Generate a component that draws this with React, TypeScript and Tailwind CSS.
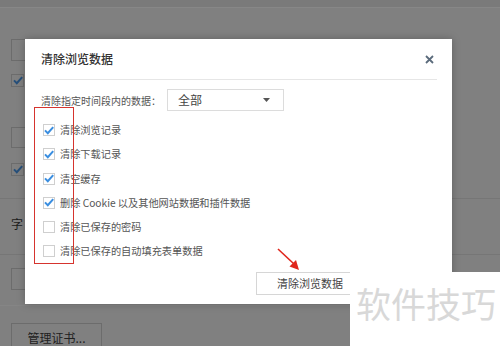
import React from "react";

const font = { fontFamily: '"Noto Sans CJK SC", "Noto Sans", sans-serif' };

const items = [
  { label: "清除浏览记录", checked: true },
  { label: "清除下载记录", checked: true },
  { label: "清空缓存", checked: true },
  { label: "删除 Cookie 以及其他网站数据和插件数据", checked: true },
  { label: "清除已保存的密码", checked: false },
  { label: "清除已保存的自动填充表单数据", checked: false },
];

function Check({ checked, dim }: { checked: boolean; dim?: boolean }) {
  return (
    <span
      className={
        dim
          ? "flex w-[13px] h-[13px] items-center justify-center border border-[#6c6c6c] bg-[#808080]"
          : "flex w-[12px] h-[12px] items-center justify-center border border-[#cfcfcf] bg-white"
      }
    >
      {checked && (
        <svg width="10" height="9" viewBox="0 0 10 9">
          <path
            d="M1 4.4 L3.8 7.2 L9.2 1.2"
            fill="none"
            stroke={dim ? "#264f7a" : "#3a8ee0"}
            strokeWidth="2"
          />
        </svg>
      )}
    </span>
  );
}

export default function App() {
  return (
    <div
      className="relative w-[500px] h-[346px] overflow-hidden bg-[#808080] text-[#222]"
      style={font}
    >
      {/* dimmed page behind the dialog */}
      <div className="h-[8px] bg-[#7a7a7a] border-b border-[#878787]" />
      <div className="flex flex-col">
        <div className="ml-[11px] mt-[31px] w-[40px] h-[22px] border border-[#6c6c6c]" />
        <div className="ml-[11px] mt-[13px]">
          <Check checked dim />
        </div>
        <div className="ml-[11px] mt-[40px] w-[40px] h-[21px] border border-[#6c6c6c]" />
        <div className="ml-[11px] mt-[15px]">
          <Check checked dim />
        </div>
        <div className="mt-[22px] h-px bg-[#767676]" />
        <div className="ml-[11px] mt-[18px] h-[14px] text-[12px] leading-[14px] text-[#1c1c1c]">字</div>
        <div className="mt-[23px] h-px bg-[#767676]" />
        <div className="ml-[11px] mt-[13px] w-[40px] h-[22px] border border-[#6c6c6c]" />
        <div className="mt-[15px] h-px bg-[#858585]" />
        <div className="ml-[11px] mt-[17px] flex w-[91px] h-[30px] items-center justify-center border border-[#6c6c6c] text-[12px] text-[#202020]">
          管理证书...
        </div>
      </div>

      {/* dialog */}
      <div className="absolute left-[25px] top-[39px] w-[427px] h-[265px] bg-white px-[15px] shadow-[0_0_8px_rgba(0,0,0,0.25)]">
        <div className="flex h-[41px] items-center justify-between border-b border-[#e6e6e6]">
          <span className="pl-[1px] text-[12px] font-medium text-[#333]">清除浏览数据</span>
          <svg width="9" height="9" viewBox="0 0 9 9" className="mr-[3px]">
            <path d="M1 1 L8 8 M8 1 L1 8" stroke="#5b6b7c" strokeWidth="1.8" />
          </svg>
        </div>

        <div className="mt-[9px] flex h-[22px] items-center">
          <span className="w-[127px] pl-[1px] text-[10px] text-[#555]">清除指定时间段内的数据：</span>
          <div className="flex w-[117px] h-[22px] items-center justify-between border border-[#dcdcdc] pl-[10px] pr-[13px]">
            <span className="text-[12px] text-[#444]">全部</span>
            <svg width="7" height="4" viewBox="0 0 7 4">
              <path d="M0 0 L7 0 L3.5 4 Z" fill="#555" />
            </svg>
          </div>
        </div>

        <div className="mt-[13px] flex flex-col">
          {items.map((it) => (
            <div key={it.label} className="flex h-[24.3px] items-start gap-[5px] pl-[3px]">
              <Check checked={it.checked} />
              <span className="-mt-[1px] text-[10.2px] leading-[14px] text-[#555]">{it.label}</span>
            </div>
          ))}
        </div>

        <div className="ml-[216px] mt-[2px] flex w-[100px] h-[23px] items-center border border-[#d6d6d6] pl-[20px] text-[11px] text-[#444]">
          清除浏览数据
        </div>
      </div>

      {/* annotations */}
      <div className="absolute left-[34px] top-[107px] w-[40px] h-[157px] border border-[#d6342e]" />
      <svg className="absolute left-[274px] top-[244px]" width="30" height="30" viewBox="0 0 30 30">
        <path d="M4 5 L20 20" stroke="#e0261c" strokeWidth="1.6" />
        <path d="M25 26 L15.5 22.5 L22 16 Z" fill="#e0261c" />
      </svg>

      {/* watermark */}
      <div className="absolute left-[350px] top-[272px] w-[150px] h-[74px] bg-white">
        <div className="pl-[6px] pt-[11px] text-[35px] leading-[40px] text-[#d8d8d8]">软件技巧</div>
      </div>
    </div>
  );
}
